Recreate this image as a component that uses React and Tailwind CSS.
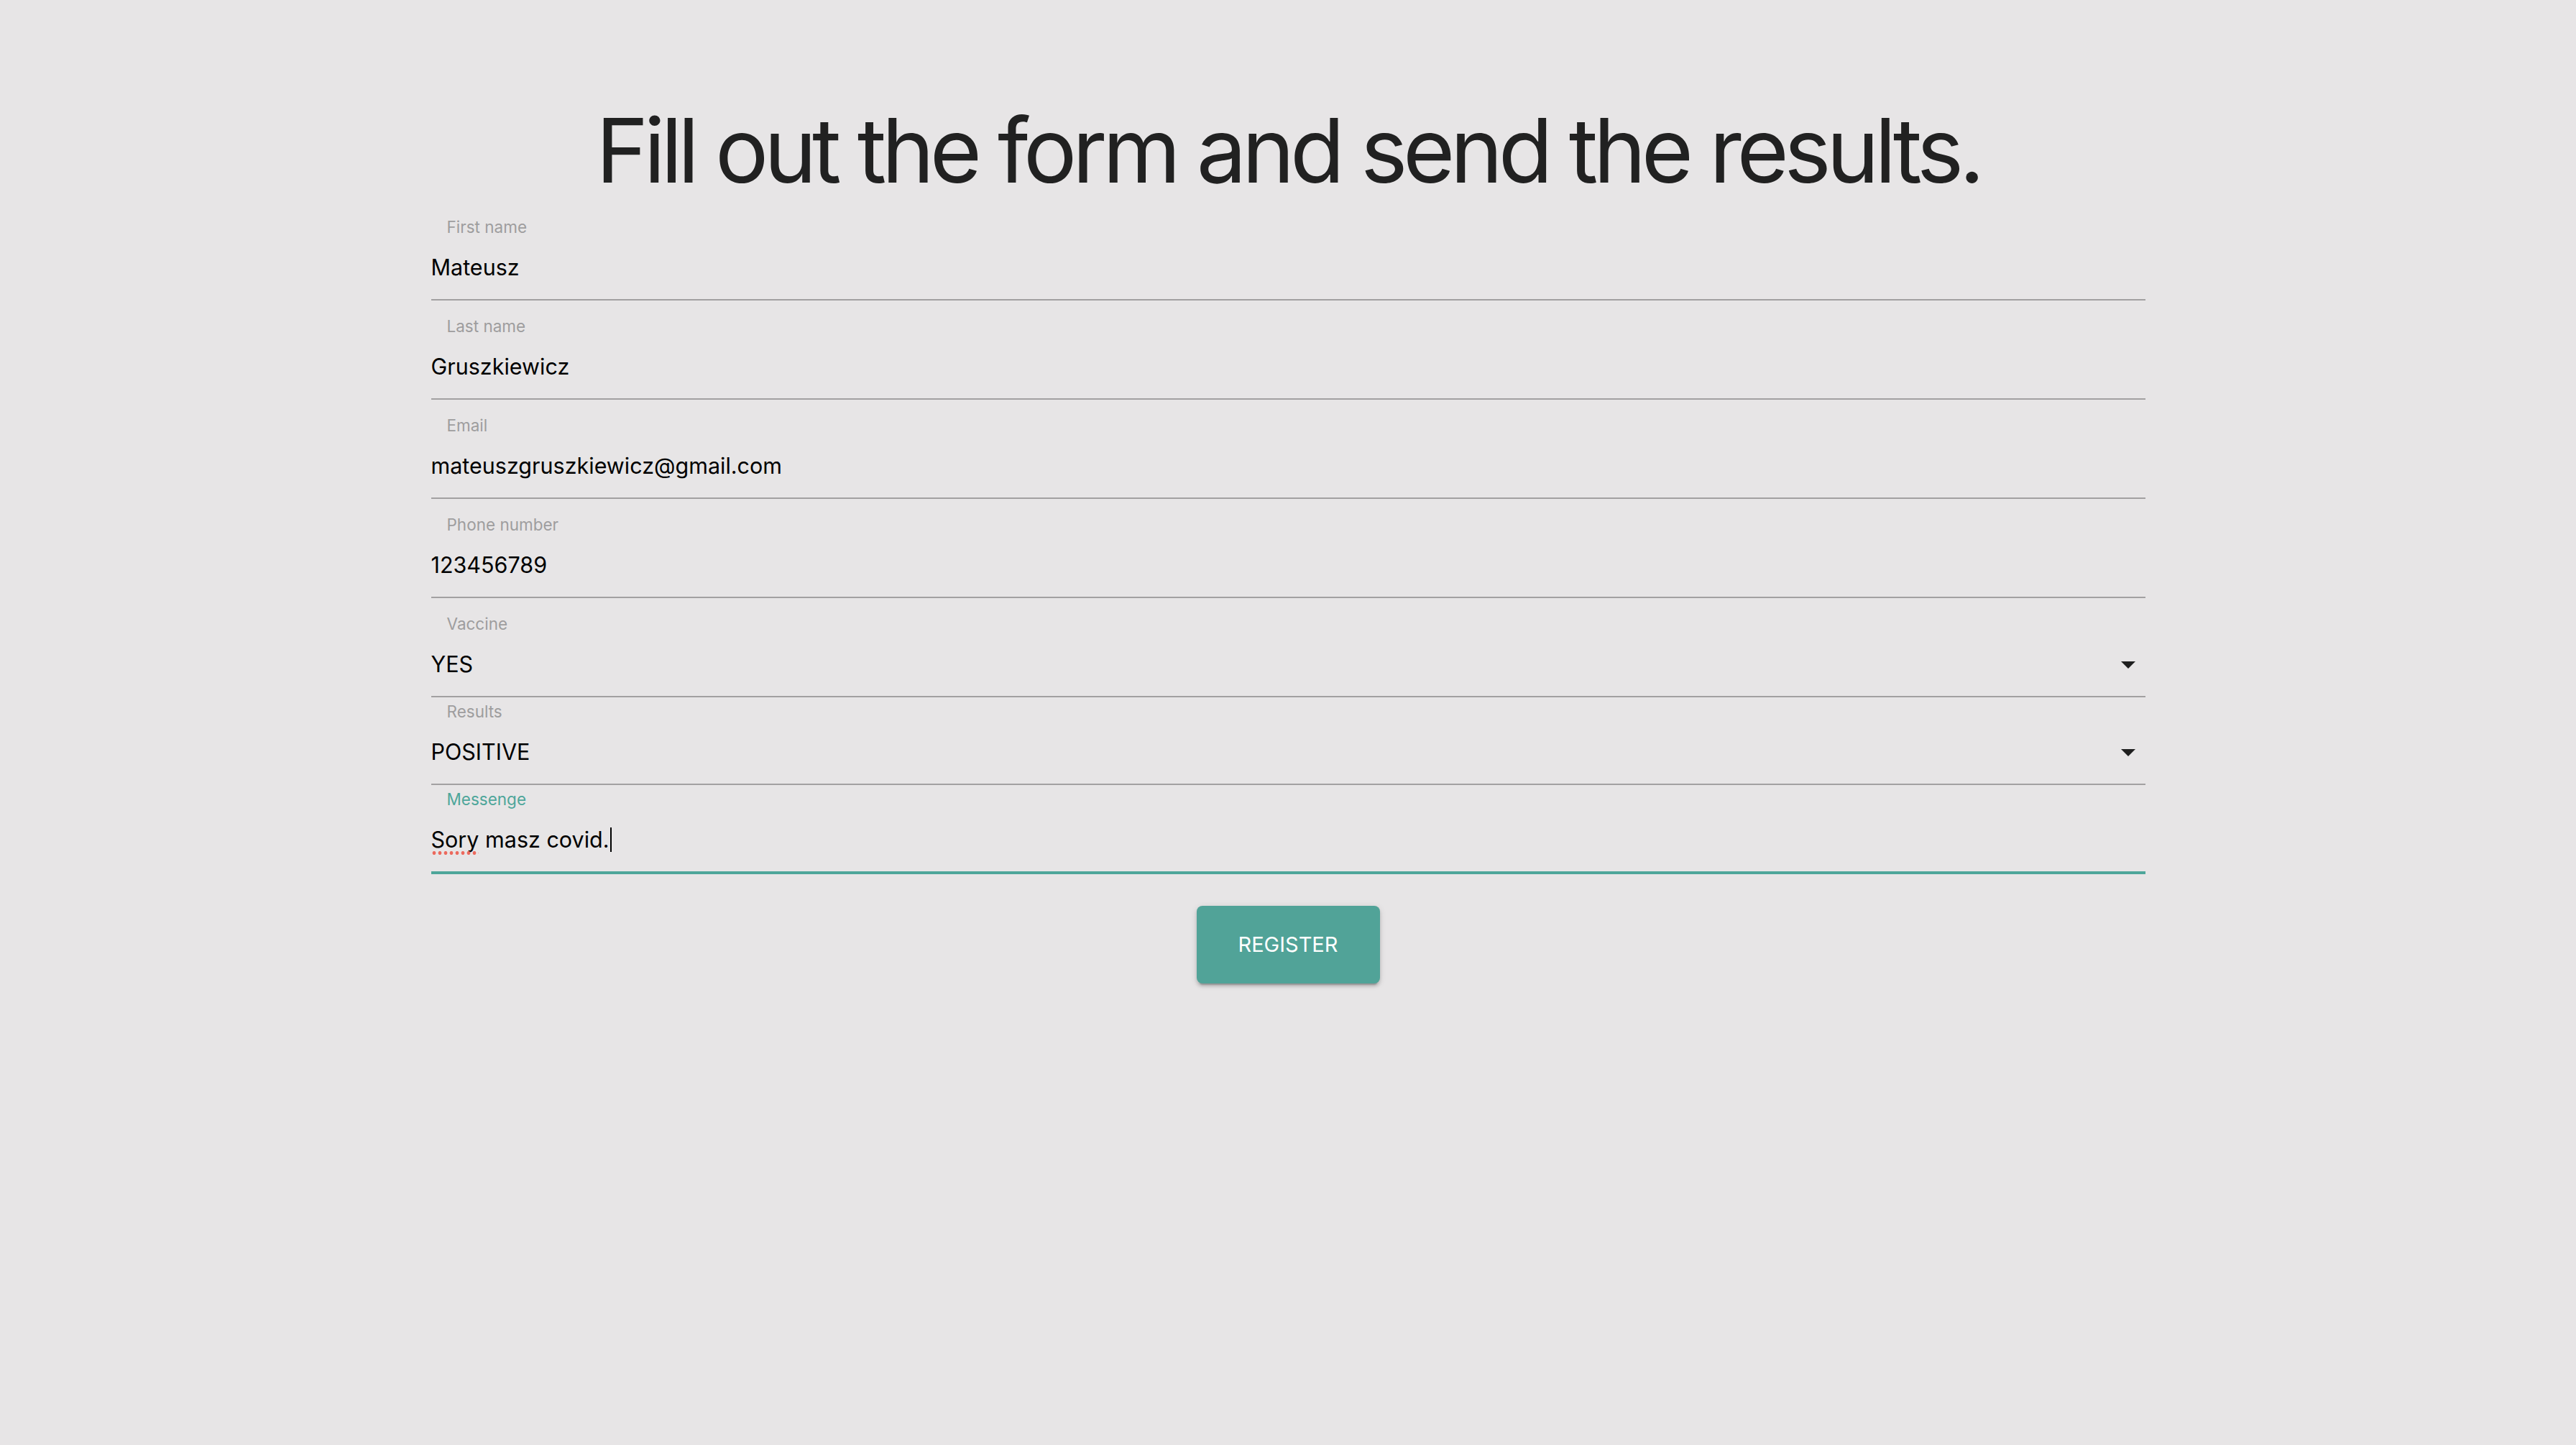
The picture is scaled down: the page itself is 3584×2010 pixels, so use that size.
import React from "react";

const fields = [
  { label: "First name", value: "Mateusz", roomy: true },
  { label: "Last name", value: "Gruszkiewicz", roomy: true },
  { label: "Email", value: "mateuszgruszkiewicz@gmail.com", roomy: true },
  { label: "Phone number", value: "123456789", roomy: true },
];

function Caret() {
  return (
    <svg width="20" height="10" viewBox="0 0 20 10" className="shrink-0">
      <path d="M0 0 L20 0 L10 10 Z" fill="#1f1f1f" />
    </svg>
  );
}

function Field({ label, value, roomy, select }) {
  return (
    <div className={`${roomy ? "pt-[25px]" : "pt-[9px]"} pb-[29px] border-b-2 border-[#a2a0a1]`}>
      <div className="pl-[22px] text-[22.5px] leading-[22px] text-[#9e9d9e]">{label}</div>
      <div className="mt-[30px] flex items-center justify-between text-[30.5px] leading-[30px] text-black">
        <span>{value}</span>
        {select && (
          <span className="pr-[14px] pt-[2px] flex">
            <Caret />
          </span>
        )}
      </div>
    </div>
  );
}

export default function App() {
  return (
    <div
      className="min-h-screen bg-[#e7e5e6] flex flex-col items-center"
      style={{ fontFamily: "Inter, 'Noto Sans', sans-serif" }}
    >
      <h1 className="mt-[147px] text-[124px] leading-none text-[#212121] tracking-[-6.4px]">
        Fill out the form and send the results.
      </h1>

      <form className="w-[2385px] mt-[9px]">
        {fields.map((f) => (
          <Field key={f.label} {...f} />
        ))}
        <Field label="Vaccine" value="YES" roomy select />
        <Field label="Results" value="POSITIVE" select />

        {/* focused message field */}
        <div className="pt-[9px] pb-[29px] border-b-4 border-[#4ea69a]">
          <div className="pl-[22px] text-[22.5px] leading-[22px] text-[#4ea69a]">Messenge</div>
          <div className="mt-[30px] text-[30.5px] leading-[30px] text-black flex items-center">
            <span className="relative">
              Sory
              <span className="absolute left-0 right-0 bottom-[-6px] h-[5px] bg-[radial-gradient(circle,#ec6a5e_2.4px,transparent_2.6px)] bg-[length:8px_5px] bg-repeat-x" />
            </span>
            <span>&nbsp;masz covid.</span>
            <span className="inline-block w-[2px] h-[34px] -my-[2px] bg-black ml-[1px]" />
          </div>
        </div>

        <div className="flex justify-center mt-[44px]">
          <button
            type="button"
            className="w-[255px] h-[108px] rounded-[8px] bg-[#51a398] text-white text-[29px] shadow-[0_6px_2px_-4px_rgba(0,0,0,0.2),0_4px_4px_0_rgba(0,0,0,0.14),0_2px_10px_0_rgba(0,0,0,0.12)]"
          >
            REGISTER
          </button>
        </div>
      </form>
    </div>
  );
}
